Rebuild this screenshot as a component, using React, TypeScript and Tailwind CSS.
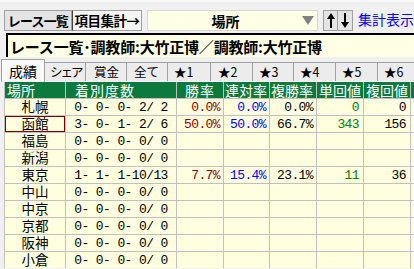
import React from 'react';

type Row = {
  place: string;
  count: string;
  win?: string;
  rentai?: string;
  fukusho?: string;
  tan?: string;
  fuku?: string;
  selected?: boolean;
};

const rows: Row[] = [
  { place: '札幌', count: '0- 0- 0- 2/ 2', win: '0.0%', rentai: '0.0%', fukusho: '0.0%', tan: '0', fuku: '0' },
  { place: '函館', count: '3- 0- 1- 2/ 6', win: '50.0%', rentai: '50.0%', fukusho: '66.7%', tan: '343', fuku: '156', selected: true },
  { place: '福島', count: '0- 0- 0- 0/ 0' },
  { place: '新潟', count: '0- 0- 0- 0/ 0' },
  { place: '東京', count: '1- 1- 1-10/13', win: '7.7%', rentai: '15.4%', fukusho: '23.1%', tan: '11', fuku: '36' },
  { place: '中山', count: '0- 0- 0- 0/ 0' },
  { place: '中京', count: '0- 0- 0- 0/ 0' },
  { place: '京都', count: '0- 0- 0- 0/ 0' },
  { place: '阪神', count: '0- 0- 0- 0/ 0' },
  { place: '小倉', count: '0- 0- 0- 0/ 0' },
];

const tabs = [
  { label: 'シェア', w: 'w-[41px] pl-[5px] tracking-[-2px]' },
  { label: '賞金', w: 'w-[41px] pl-[8px]' },
  { label: '全て', w: 'w-[41px] pl-[7px]' },
  { label: '★1', w: 'w-[43px] pl-[6px]' },
  { label: '★2', w: 'w-[42px] pl-[7px]' },
  { label: '★3', w: 'w-[41px] pl-[6px]' },
  { label: '★4', w: 'w-[42px] pl-[6px]' },
  { label: '★5', w: 'w-[42px] pl-[6px]' },
  { label: '★6', w: 'w-[42px] pl-[6px]' },
];

const num = "font-['Liberation_Mono',monospace] text-[13px] tracking-[-0.6px] whitespace-pre";

const App: React.FC = () => {
  return (
    <div className="w-[414px] h-[269px] overflow-hidden bg-[#f0f0f0] font-['Noto_Sans_CJK_JP',sans-serif] text-black">
      {/* toolbar */}
      <div className="h-[33px] flex items-start pt-[8px] pl-1 whitespace-nowrap border-t-[2px] border-[#f8f8f8]">
        <div className="w-[74px] h-[21px] flex items-center justify-center bg-[#e4e4e4] border border-[#a0a0a0] text-[13px] font-bold leading-none tracking-[-0.8px]">
          レース一覧
        </div>
        <div className="w-[77px] h-[21px] flex items-center justify-center bg-[#f4f4f4] border border-[#a0a0a0] border-l-[#404040] text-[13.5px] font-bold leading-none tracking-[-0.5px]">
          項目集計→
        </div>
        <div className="ml-[5px] w-[187px] h-[21px] flex items-center bg-[#ffffe6] border border-[#d8d8d8]">
          <span className="flex-1 text-center text-[14px] font-bold leading-none">場所</span>
          <svg width="12" height="9" viewBox="0 0 12 9" className="mr-[3px]">
            <polygon points="0,0 12,0 6,9" fill="#808080" />
          </svg>
        </div>
        <div className="ml-[5px] w-[16px] h-[21px] flex items-center justify-center bg-[#e4e4e4] border border-[#a0a0a0]">
          <svg width="10" height="17" viewBox="0 0 10 17">
            <polygon points="5,1 9,7 6,7 6,16 4,16 4,7 1,7" fill="#000" />
          </svg>
        </div>
        <div className="w-[16px] h-[21px] flex items-center justify-center bg-[#e4e4e4] border border-[#a0a0a0] border-l-0">
          <svg width="10" height="17" viewBox="0 0 10 17">
            <polygon points="5,16 9,10 6,10 6,1 4,1 4,10 1,10" fill="#000" />
          </svg>
        </div>
        <span className="ml-[5px] mt-[2px] text-[14px] leading-none text-[#0000ff]">集計表示</span>
      </div>

      {/* title */}
      <div className="ml-[6px] h-[24px] flex items-center bg-[#ffffe6] border-t-2 border-l-2 border-black whitespace-nowrap overflow-hidden">
        <span className="pl-[2px] text-[15px] font-bold leading-none tracking-[-0.2px]">
          レース一覧･調教師:大竹正博／調教師:大竹正博
        </span>
      </div>

      {/* tabs */}
      <div className="h-[25px] flex items-end pl-[1px] border-b border-white whitespace-nowrap">
        <div className="relative z-10 -mb-px shrink-0 w-[44px] h-[23px] flex items-center pl-[7px] bg-[#fafafa] border-t border-l border-r border-[#a0a0a0] text-[14px] leading-none">
          成績
        </div>
        {tabs.map((t) => (
          <div
            key={t.label}
            className={`${t.w} shrink-0 h-[19px] flex items-center overflow-hidden bg-[#ececec] border-t border-r border-[#a0a0a0] text-[12.5px] leading-none`}
          >
            {t.label}
          </div>
        ))}
      </div>

      {/* table */}
      <div className="ml-1 grid grid-cols-[60px_110px_46px_45px_46px_46px_46px_1fr] gap-px bg-[#c0c0c0] border-l border-[#c0c0c0] text-[14px] leading-none">
        <div className="h-[16px] bg-[#0b7a3c] text-white flex items-center pl-[2px]">場所</div>
        <div className="h-[16px] bg-[#0b7a3c] text-white flex items-center pl-[9px] tracking-[1px]">着別度数</div>
        <div className="h-[16px] bg-[#0b7a3c] text-white flex items-center pl-[8px] tracking-[1px]">勝率</div>
        <div className="h-[16px] bg-[#0b7a3c] text-white flex items-center pl-[1px]">連対率</div>
        <div className="h-[16px] bg-[#0b7a3c] text-white flex items-center pl-[1px]">複勝率</div>
        <div className="h-[16px] bg-[#0b7a3c] text-white flex items-center pl-[2px]">単回値</div>
        <div className="h-[16px] bg-[#0b7a3c] text-white flex items-center pl-[2px]">複回値</div>
        <div className="h-[16px] bg-[#0b7a3c]" />

        {rows.map((r) => (
          <React.Fragment key={r.place}>
            <div
              className={`h-[16px] bg-[#ffffe0] flex items-center justify-center text-[13.5px] ${r.selected ? 'border border-[#800000]' : ''}`}
            >
              {r.place}
            </div>
            <div className={`h-[16px] bg-[#ffffe0] flex items-center justify-center ${num}`}>{r.count}</div>
            <div className={`h-[16px] bg-[#ffffe0] flex items-center justify-end pr-[3px] text-[#8b0000] ${num}`}>{r.win}</div>
            <div className={`h-[16px] bg-[#ffffe0] flex items-center justify-end pr-[3px] text-[#0000ff] ${num}`}>{r.rentai}</div>
            <div className={`h-[16px] bg-[#ffffe0] flex items-center justify-end pr-[3px] ${num}`}>{r.fukusho}</div>
            <div className={`h-[16px] bg-[#ffffe0] flex items-center justify-end pr-[4px] text-[#008000] ${num}`}>{r.tan}</div>
            <div className={`h-[16px] bg-[#ffffe0] flex items-center justify-end pr-[4px] ${num}`}>{r.fuku}</div>
            <div className="h-[16px] bg-[#ffffe0]" />
          </React.Fragment>
        ))}
      </div>
    </div>
  );
};

export default App;
